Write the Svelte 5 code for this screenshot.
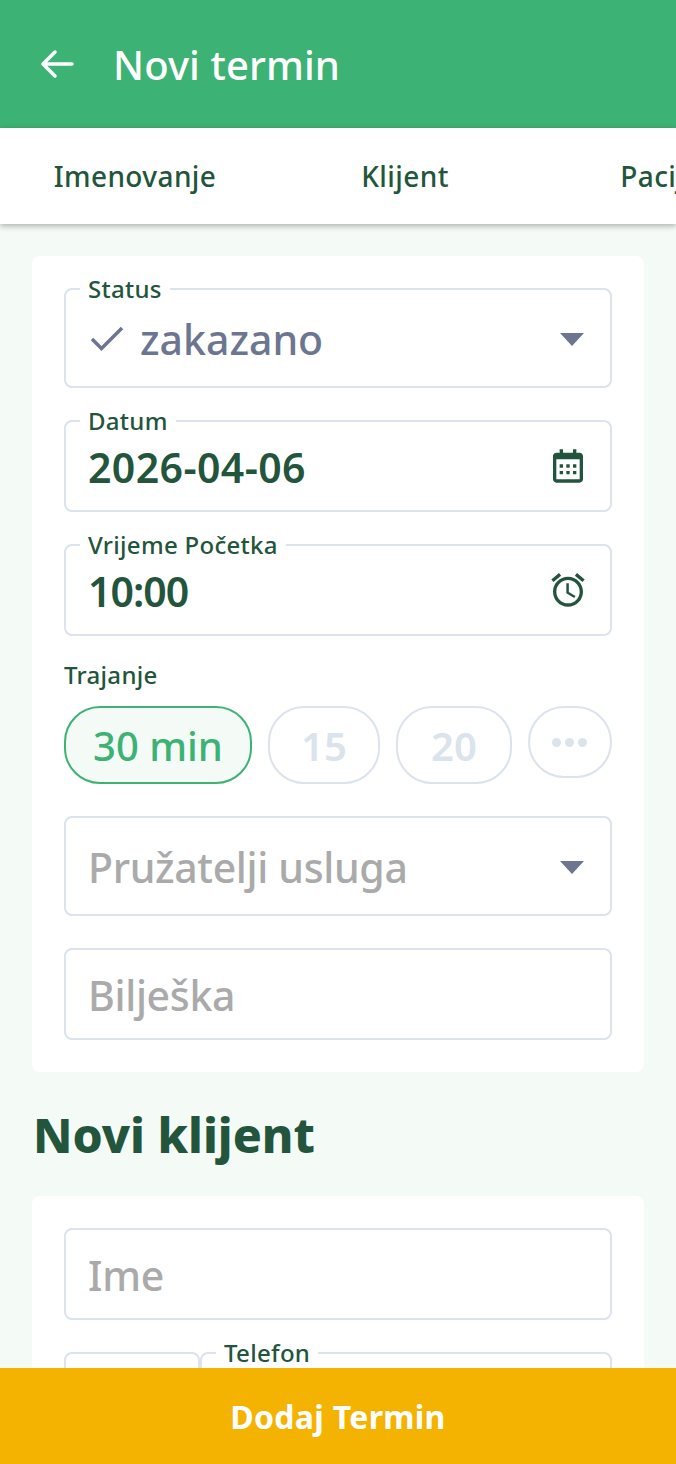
<script lang="ts">
	const tabs = ['Imenovanje', 'Klijent', 'Pacijent'];
	const durations = [
		{ label: '30 min', active: true },
		{ label: '15', active: false },
		{ label: '20', active: false }
	];
</script>

<div class="page">
	<header class="topbar">
		<svg class="back" viewBox="0 0 34 30" aria-hidden="true">
			<path d="M32 15H3M15 3 3 15l12 12" />
		</svg>
		<h1>Novi termin</h1>
	</header>

	<nav class="tabs">
		{#each tabs as tab}
			<span class="tab">{tab}</span>
		{/each}
	</nav>

	<main class="content">
		<section class="card">
			<div class="field tall">
				<span class="label">Status</span>
				<svg class="check" viewBox="0 0 34 26" aria-hidden="true"><path d="M2 14l9.500 9.500L32 3" /></svg>
				<span class="value muted">zakazano</span>
				<span class="caret"></span>
			</div>

			<div class="field">
				<span class="label">Datum</span>
				<span class="value strong date">2026-04-06</span>
				<svg class="icon" viewBox="0 0 24 24" aria-hidden="true">
					<path d="M7 11h2v2H7zm0 4h2v2H7zm4-4h2v2h-2zm0 4h2v2h-2zm4-4h2v2h-2zm0 4h2v2h-2z" />
					<path d="M5 22h14c1.103 0 2-.897 2-2V6c0-1.103-.897-2-2-2h-2V2h-2v2H9V2H7v2H5c-1.103 0-2 .897-2 2v14c0 1.103.897 2 2 2zM19 8l.001 12H5V8h14z" />
				</svg>
			</div>

			<div class="field">
				<span class="label">Vrijeme Početka</span>
				<span class="value strong time">10:00</span>
				<svg class="icon" viewBox="0 0 24 24" aria-hidden="true">
					<path d="M22 5.720l-4.600-3.860-1.290 1.530 4.600 3.860L22 5.720zM7.880 3.390L6.600 1.860 2 5.710l1.290 1.530 4.590-3.850zM12.500 8H11v6l4.750 2.850.75-1.230-4-2.370V8zM12 4c-4.970 0-9 4.030-9 9s4.030 9 9 9 9-4.030 9-9-4.030-9-9-9zm0 16c-3.870 0-7-3.130-7-7s3.130-7 7-7 7 3.130 7 7-3.130 7-7 7z" />
				</svg>
			</div>

			<div class="duration">
				<span class="duration-label">Trajanje</span>
				<div class="chips">
					{#each durations as d}
						<span class="chip" class:active={d.active}>{d.label}</span>
					{/each}
					<span class="chip more"><i></i><i></i><i></i></span>
				</div>
			</div>

			<div class="field tall">
				<span class="value placeholder">Pružatelji usluga</span>
				<span class="caret"></span>
			</div>

			<div class="field">
				<span class="value placeholder">Bilješka</span>
			</div>
		</section>

		<h2>Novi klijent</h2>

		<section class="card">
			<div class="field">
				<span class="value placeholder">Ime</span>
			</div>
			<div class="phone">
				<div class="field prefix"></div>
				<div class="field number">
					<span class="label">Telefon</span>
				</div>
			</div>
		</section>
	</main>

	<button class="submit">Dodaj Termin</button>
</div>

<style>
	:global(body) {
		margin: 0;
		background: #f4faf6;
	}

	.page {
		height: 1464px;
		display: flex;
		flex-direction: column;
		overflow: hidden;
		font-family: 'Noto Sans', Inter, sans-serif;
		color: #22553b;
	}

	.topbar {
		flex: none;
		height: 128px;
		background: #3cb274;
		display: flex;
		align-items: center;
		gap: 39px;
		padding-left: 40px;
		color: #fff;
	}

	.back {
		width: 34px;
		height: 30px;
		fill: none;
		stroke: #fff;
		stroke-width: 3.5;
		stroke-linecap: round;
		stroke-linejoin: round;
	}

	h1 {
		margin: 0;
		font-size: 40px;
		font-weight: 500;
		letter-spacing: 0.1px;
	}

	.tabs {
		flex: none;
		position: relative;
		height: 96px;
		background: #fff;
		box-shadow: 0 2px 6px rgba(0, 0, 0, 0.3);
		display: flex;
		align-items: center;
		overflow: hidden;
		white-space: nowrap;
		font-size: 28px;
		font-weight: 500;
		letter-spacing: 0.4px;
	}

	.tab {
		flex: 0 0 270px;
		text-align: center;
	}

	.content {
		flex: 1;
		min-height: 0;
		overflow: hidden;
		padding: 32px 32px 0;
	}

	.card {
		background: #fff;
		border-radius: 8px;
		padding: 32px;
		display: flex;
		flex-direction: column;
		gap: 32px;
	}

	.field {
		position: relative;
		flex: none;
		box-sizing: border-box;
		height: 92px;
		border: 2px solid #dbe3ed;
		border-radius: 8px;
		padding: 0 24px;
		display: flex;
		align-items: center;
		background: #fff;
	}

	.field.tall {
		height: 100px;
	}

	.label {
		position: absolute;
		top: -15px;
		left: 14px;
		padding: 0 8px;
		background: #fff;
		font-size: 24px;
		line-height: 28px;
		font-weight: 500;
		letter-spacing: 0.3px;
	}

	.value {
		flex: 1;
		margin-left: -2px;
		padding-top: 2px;
		font-size: 41px;
		line-height: 50px;
		font-weight: 500;
	}

	.strong {
		font-weight: 600;
	}

	.date {
		letter-spacing: 0.4px;
	}

	.time {
		letter-spacing: -1px;
	}

	.muted {
		color: #6c7690;
		margin-left: 0;
	}

	.placeholder {
		color: #aaaaaa;
		letter-spacing: -0.35px;
	}

	.check {
		width: 34px;
		height: 26px;
		margin-right: 16px;
		fill: none;
		stroke: #6c7690;
		stroke-width: 3.5;
	}

	.caret {
		width: 0;
		height: 0;
		margin: 2px 2px 0 0;
		border-left: 12px solid transparent;
		border-right: 12px solid transparent;
		border-top: 13px solid #6c7690;
	}

	.icon {
		flex: none;
		width: 40px;
		height: 40px;
		margin-right: -2px;
		fill: #22553b;
	}

	.duration {
		display: flex;
		flex-direction: column;
		gap: 16px;
		margin-top: -8px;
	}

	.duration-label {
		font-size: 24px;
		line-height: 30px;
		font-weight: 500;
		letter-spacing: 0.3px;
	}

	.chips {
		display: flex;
		align-items: flex-start;
		justify-content: space-between;
	}

	.chip {
		box-sizing: border-box;
		height: 78px;
		border: 2px solid #dbe3ed;
		border-radius: 36px;
		padding: 0 31px;
		display: flex;
		align-items: center;
		justify-content: center;
		font-size: 40px;
		font-weight: 600;
		color: #dbe3ed;
	}

	.chip:nth-child(3) {
		padding: 0 33px;
	}

	.chip.active {
		padding: 0 27px;
		border-color: #3cb274;
		background: #f4faf6;
		color: #3cb274;
		font-weight: 500;
	}

	.chip.more {
		width: 84px;
		height: 72px;
		padding: 0;
		gap: 4px;
	}

	.chip.more i {
		width: 9px;
		height: 9px;
		border-radius: 50%;
		background: #dbe3ed;
	}

	h2 {
		margin: 31px 0 29px 1px;
		font-size: 48px;
		line-height: 64px;
		font-weight: 800;
	}

	.phone {
		display: flex;
	}

	.prefix {
		width: 136px;
	}

	.number {
		flex: 1;
	}

	.submit {
		flex: none;
		height: 96px;
		border: 0;
		background: #f5b301;
		color: #fff;
		font: inherit;
		font-size: 32px;
		font-weight: 700;
		letter-spacing: 0.3px;
	}
</style>
